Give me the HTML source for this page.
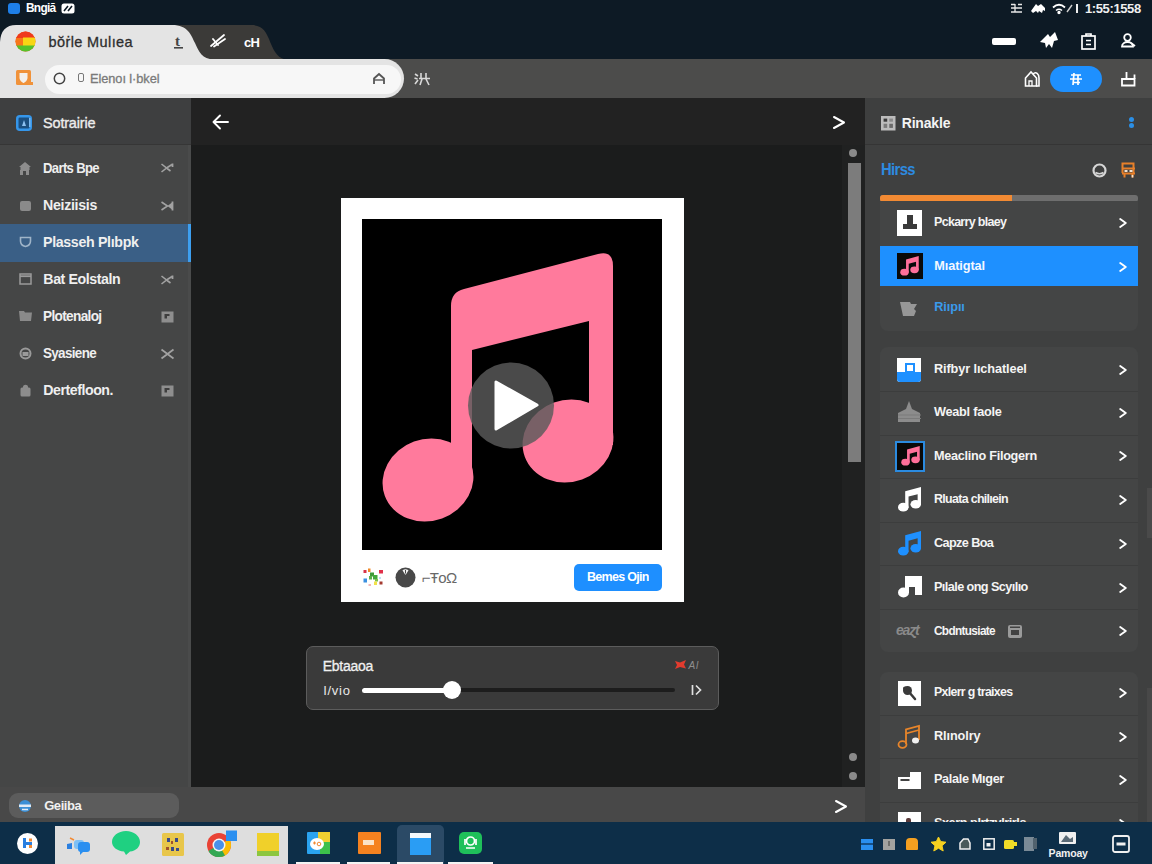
<!DOCTYPE html>
<html><head><meta charset="utf-8">
<style>
*{box-sizing:border-box;margin:0;padding:0}
html,body{width:1152px;height:864px;overflow:hidden;background:#0d1a25;font-family:"Liberation Sans",sans-serif;color:#fff}
.a{position:absolute}
.t{position:absolute;white-space:nowrap;font-weight:bold;line-height:1}
svg{position:absolute;overflow:visible}
/* sidebar */
.sb-item{position:absolute;left:0;width:191px;height:37px}
.sb-item .lbl{position:absolute;left:43px;top:11px;font-size:14px;font-weight:bold;line-height:1;color:#f2f2f2;letter-spacing:-0.2px}
/* right rows */
.row{position:absolute;left:880px;width:258px;height:43.6px}
.row .lbl{position:absolute;left:54px;top:15px;font-size:13px;font-weight:bold;line-height:1;color:#f4f4f4;letter-spacing:-0.3px;white-space:nowrap}
.row .chev{position:absolute;left:238px;top:15px;width:8px;height:13px}
.sep{position:absolute;left:880px;width:258px;height:1px;background:#3c3d3d}
</style></head><body>

<!-- ===== top system bar ===== -->
<div class="a" id="sysbar" style="left:0;top:0;width:1152px;height:59px;background:#0d1a25"></div>
<div class="a" style="left:8px;top:3px;width:12px;height:11px;background:#1e7fe8;border-radius:3px"></div>
<div class="t" style="left:26px;top:2px;font-size:12px;color:#fff;letter-spacing:-0.7px;transform:scaleX(0.988);transform-origin:0 0">Bngiā</div>
<svg style="left:61px;top:3px" width="14" height="11" viewBox="0 0 14 11"><rect x="0.5" y="0.5" width="13" height="10" rx="2.5" fill="#fff"/><path d="M3 8L7 3M7 8l4-5" stroke="#0d1a25" stroke-width="1.6"/></svg>
<!-- sys right -->
<svg style="left:1010px;top:3px" width="14" height="11" viewBox="0 0 14 11" fill="none" stroke="#e8e8e8" stroke-width="1.3"><path d="M1 1.5h4M1 5h11M1 9h11M5 1v8M8 1.5h4"/></svg>
<svg style="left:1030px;top:3px" width="16" height="11" viewBox="0 0 16 11"><path d="M1 8l5-7 2 2 3-2 4 4v3l-2-1-1 3-3-2-1 2-2-2-3 2z" fill="#fff"/></svg>
<svg style="left:1052px;top:3px" width="14" height="11" viewBox="0 0 14 11" fill="none" stroke="#fff" stroke-width="1.8"><path d="M1 4.5Q7 -1 13 4.5"/><path d="M4 7.5Q7 5 10 7.5" stroke-width="1.6"/><circle cx="7" cy="9.5" r="0.8" fill="#fff"/></svg>
<svg style="left:1066px;top:3px" width="16" height="12" viewBox="0 0 16 12" fill="none" stroke="#cfcfcf" stroke-width="1.4"><path d="M1 9L6 2"/><path d="M11 1v9" stroke="#eee" stroke-width="2"/></svg>
<div class="t" style="left:1085px;top:2px;font-size:13px;color:#f0f0f0;letter-spacing:-0.39px">1:55:1558</div>

<!-- ===== tab strip ===== -->
<svg style="left:0;top:0" width="1152" height="60" viewBox="0 0 1152 60">
<path d="M150,59.5 L150,25 L251,25 C263,25 266,32 269,39 C273,49 276,57 285,59.5 Z" fill="#3b3a38"/>
<path d="M0,60 L0,42 Q1,25 16,25 L172,25 C188,25 191,35 195,43 C199,52 202,59 214,59.5 L214,60 Z" fill="#e4e4e4"/>
</svg>
<!-- favicon -->
<svg style="left:15px;top:31px" width="21" height="21" viewBox="0 0 21 21"><defs><clipPath id="fv"><circle cx="10.5" cy="10.5" r="10"/></clipPath></defs>
<g clip-path="url(#fv)"><rect width="21" height="21" fill="#f25a1a"/><rect x="0" y="0" width="21" height="7" fill="#ef3a1c"/><rect x="8" y="6.5" width="13" height="9" fill="#f7d614"/><rect x="0" y="7" width="8" height="8" fill="#f7761a"/><rect x="0" y="14.5" width="21" height="7" fill="#55c22a"/></g></svg>
<div class="t" style="left:48.5px;top:35.0px;font-size:14.5px;font-weight:normal;color:#2e2e2e;-webkit-text-stroke:0.3px #2e2e2e;letter-spacing:0.39px">bŏṙle Mulıea</div>
<div class="t" style="left:175px;top:34.0px;font-size:15px;color:#444;font-family:'Liberation Serif',serif">t</div>
<svg style="left:174px;top:47px" width="9" height="2"><rect width="9" height="1.6" fill="#444"/></svg>
<svg style="left:209px;top:33px" width="18" height="16" viewBox="0 0 18 16" fill="none" stroke="#fff" stroke-width="1.8" stroke-linecap="round"><path d="M2 13L15 2"/><path d="M5 13.5L16 6"/><path d="M4 6l5 6"/></svg>
<div class="t" style="left:244px;top:35.5px;font-size:13px;color:#fff;letter-spacing:-0.61px">cH</div>
<!-- tab row right icons -->
<div class="a" style="left:992px;top:37.5px;width:24px;height:7.5px;background:#fff;border-radius:2px"></div>
<svg style="left:1040px;top:32px" width="18" height="17" viewBox="0 0 18 17"><path d="M0 10L8 2l2 3 5-5 3 8-4 1-2 7-3-4-3 4-1-5z" fill="#fff"/></svg>
<svg style="left:1081px;top:33px" width="15" height="17" viewBox="0 0 15 17" fill="none" stroke="#fff" stroke-width="1.7"><rect x="1" y="3" width="13" height="13"/><path d="M5 3V1h5v2" /><path d="M5 7.5h5M5 11.5h5" stroke-width="1.5"/></svg>
<svg style="left:1121px;top:33px" width="15" height="16" viewBox="0 0 15 16" fill="none" stroke="#fff" stroke-width="1.8"><circle cx="6.5" cy="4.5" r="3.3"/><path d="M1 13.5c0-6 11-6 11 0z"/><path d="M10 10l4 3" /></svg>

<!-- ===== toolbar ===== -->
<div class="a" id="toolbar" style="left:0;top:59px;width:1152px;height:39px;background:#4c4c4b"></div>
<div class="a" id="tb-light" style="left:0;top:59px;width:404px;height:39px;background:#e4e4e4;border-radius:0 20px 20px 0"></div>
<div class="a" id="url" style="left:45px;top:65px;width:356px;height:28.5px;background:#f7f7f7;border-radius:14.5px"></div>
<!-- orange icon -->
<svg style="left:16px;top:70px" width="18" height="17" viewBox="0 0 18 17"><rect x="0" y="0" width="15" height="15" rx="1.5" fill="#f0923a"/><path d="M3.5 3h8v5c0 3-4 5-4 5s-4-2-4-5z" fill="#f3f0ec"/><path d="M11 12l6 0 0 3-6 0z" fill="#f0923a"/></svg>
<svg style="left:53px;top:72px" width="13" height="13" viewBox="0 0 13 13"><circle cx="6.5" cy="6.5" r="5.2" fill="none" stroke="#444" stroke-width="1.5"/></svg>

<div class="a" style="left:78px;top:73px;width:6px;height:9px;border:1.5px solid #777;border-radius:2px"></div>
<div class="t" style="left:90px;top:73.0px;font-size:12.8px;font-weight:normal;color:#7a7a7a;-webkit-text-stroke:0.3px #7a7a7a;letter-spacing:-0.07px">Elenoı l·bkel</div>
<svg style="left:372px;top:72px" width="14" height="13" viewBox="0 0 14 13" fill="none" stroke="#555" stroke-width="1.8"><path d="M2 12V6.5L7 2l5 4.5V12"/><path d="M2 8h10" stroke-width="1.4"/></svg>

<svg style="left:414px;top:72px" width="17" height="14" viewBox="0 0 17 14" fill="none" stroke="#d8d8d8" stroke-width="1.6"><path d="M1 2l3 2M0.5 6l3 1M1 12l3-4"/><path d="M7 1v5M12 1v5M5 6.5h11M8 7l-2 6M12 7l3 6"/></svg>
<!-- toolbar right -->
<svg style="left:1024px;top:70px" width="17" height="17" viewBox="0 0 17 17" fill="none" stroke="#fff" stroke-width="1.6"><path d="M1.5 16V8L7 2l5.5 6V16z"/><path d="M9 4c3-3 6 0 6 4v8h-3"/><path d="M5 16v-5h3v5" stroke-width="1.3"/></svg>
<div class="a" style="left:1050px;top:66px;width:52px;height:26px;background:#1e90ff;border-radius:13px"></div>
<svg style="left:1069px;top:72px" width="14" height="14" viewBox="0 0 14 14" fill="none" stroke="#fff" stroke-width="1.7"><path d="M2 3h10M1 7h12M4 10.5h7M5 1l-1 12M9 3v10"/></svg>
<svg style="left:1120px;top:71px" width="16" height="16" viewBox="0 0 16 16" fill="none" stroke="#fff" stroke-width="1.8"><path d="M2 8h12.5v6.5H2z"/><path d="M6.5 8V1"/><path d="M14.5 8V3.5"/></svg>

<!-- ===== main panes ===== -->
<div class="a" id="sidebar" style="left:0;top:98px;width:191px;height:724px;background:#454646;border-right:3px solid #4a4b4b"></div>
<div class="a" id="sb-head" style="left:0;top:98px;width:191px;height:47px;background:#3e3f40;border-bottom:1px solid #363636"></div>
<div class="a" id="center" style="left:191px;top:98px;width:674px;height:724px;background:#1b1c1c"></div>
<div class="a" id="c-head" style="left:191px;top:98px;width:674px;height:47px;background:#222222"></div>
<div class="a" id="right" style="left:865px;top:98px;width:287px;height:724px;background:#3f4040"></div>
<div class="a" id="r-head" style="left:865px;top:98px;width:287px;height:47px;background:#3e3f3f;border-bottom:1px solid #353535"></div>
<div class="a" id="botbar" style="left:0;top:787px;width:865px;height:35px;background:#484848"></div>

<!-- ===== sidebar content ===== -->
<div class="a" style="left:0;top:224px;width:191px;height:38px;background:#3a5f86"></div>
<div class="a" style="left:188px;top:224px;width:3px;height:38px;background:#3d9ff0"></div>
<svg style="left:16px;top:115px" width="16" height="16" viewBox="0 0 16 16"><rect x="1.250" y="1.250" width="13.500" height="13.500" rx="2.500" fill="#1b4f80" stroke="#3596ea" stroke-width="2.500"/><path d="M6 11l2-6 2 6z" fill="#8cc0f0"/><path d="M13 3h1.500v9H13z" fill="#7ab8f0"/></svg>
<div class="t sbl" style="left:43px;top:115.500px;font-size:14.500px;font-weight:normal;color:#ececec;-webkit-text-stroke:0.35px #ececec;letter-spacing:-0.18px">Sotrairie</div>
<div class="t sbl" style="left:43px;top:160.7px;font-size:14.2px;color:#efefef;letter-spacing:-0.7px;transform:scaleX(0.922);transform-origin:0 0">Darts Bpe</div>
<svg style="left:19px;top:161.5px" width="12" height="13" viewBox="0 0 12 13"><path d="M6 0L0 5h1.5v3H1v5h3V9h3v4h3V8h.5V5H12z" fill="#8d8d8d"/></svg>
<svg style="left:161px;top:163px" width="13" height="10" viewBox="0 0 13 10" fill="none" stroke="#a2a2a2" stroke-width="1.6"><path d="M0.500 1l5 4-5 4"/><path d="M5.500 5L11 1.500M5.500 5l4 3" /><path d="M11.500 0.500v3.500" stroke-width="1.8"/></svg>
<div class="t sbl" style="left:43px;top:198.2px;font-size:14.2px;color:#efefef;letter-spacing:-0.31px">Neiziisis</div>
<div class="a" style="left:20px;top:200.5px;width:11px;height:10px;background:#8a8a8a;border-radius:2px"></div>
<svg style="left:161px;top:200.5px" width="13" height="10" viewBox="0 0 13 10" fill="none" stroke="#a2a2a2" stroke-width="1.6"><path d="M0.500 1l6 4-6 4"/><path d="M6.500 5l4.500-3.500v7z" fill="#a2a2a2" stroke="none"/><path d="M11.500 0.500v9" stroke-width="1.8"/></svg>
<div class="t sbl" style="left:43px;top:235.2px;font-size:14.2px;color:#efefef;letter-spacing:-0.33px">Plasseh Plıbpk</div>
<svg style="left:19px;top:236.0px" width="13" height="12" viewBox="0 0 13 12" fill="none" stroke="#9fb4c8" stroke-width="1.6"><path d="M1.5 1.5h10v3.5c0 3-2.5 5-5 5.5C4 10 1.5 8 1.500 5z"/></svg>
<div class="t sbl" style="left:43.3px;top:272.2px;font-size:14.2px;color:#efefef;letter-spacing:-0.41px">Bat Eolstaln</div>
<svg style="left:19px;top:273.0px" width="13" height="12" viewBox="0 0 13 12" fill="none" stroke="#9a9a9a" stroke-width="1.5"><rect x="1" y="1" width="11" height="10"/><path d="M1 3.2h11" stroke-width="1.8"/></svg>
<svg style="left:161px;top:274.5px" width="13" height="10" viewBox="0 0 13 10" fill="none" stroke="#a2a2a2" stroke-width="1.6"><path d="M0.500 1l5 4-5 4"/><path d="M5.500 5L11 1.500M5.500 5l4 3" /><path d="M11.500 0.500v3.500" stroke-width="1.8"/></svg>
<div class="t sbl" style="left:43.3px;top:309.2px;font-size:14.2px;color:#efefef;letter-spacing:-0.7px;transform:scaleX(0.962);transform-origin:0 0">Plotenaloj</div>
<svg style="left:19px;top:310.0px" width="13" height="12" viewBox="0 0 13 12"><path d="M0 1h5l1 1.5h7L12 11H1z" fill="#8a8a8a"/></svg>
<svg style="left:161px;top:310.5px" width="13" height="12" viewBox="0 0 13 12"><rect x="0.500" y="0.500" width="12" height="11" fill="#8e8e8e"/><rect x="3.500" y="3" width="5" height="4.500" fill="#3e3e3e"/><rect x="6" y="5" width="4" height="3" fill="#8e8e8e"/></svg>
<div class="t sbl" style="left:43.3px;top:346.2px;font-size:14.2px;color:#efefef;letter-spacing:-0.7px;transform:scaleX(0.948);transform-origin:0 0">Syasiene</div>
<svg style="left:19px;top:347.0px" width="13" height="13" viewBox="0 0 13 13"><circle cx="6.500" cy="6.500" r="5" fill="none" stroke="#9a9a9a" stroke-width="2"/><rect x="3.500" y="5" width="6" height="4" fill="#9a9a9a"/></svg>
<svg style="left:161px;top:348.5px" width="13" height="10" viewBox="0 0 13 10" fill="none" stroke="#a2a2a2" stroke-width="1.700"><path d="M0.500 0.500l12 9M0.500 9.500l12-9"/></svg>
<div class="t sbl" style="left:43.3px;top:383.2px;font-size:14.2px;color:#efefef;letter-spacing:-0.47px">Dertefloon.</div>
<svg style="left:20px;top:384.0px" width="11" height="13" viewBox="0 0 11 13"><path d="M3 3c0-3 5-3 5 0v1H3z" fill="#8d8d8d"/><rect x="0.500" y="3.500" width="10" height="9" rx="1.5" fill="#8d8d8d"/></svg>
<svg style="left:161px;top:384.5px" width="13" height="12" viewBox="0 0 13 12"><rect x="0.500" y="0.500" width="12" height="11" fill="#8e8e8e"/><rect x="3.500" y="3" width="5" height="4.500" fill="#3e3e3e"/><rect x="6" y="5" width="4" height="3" fill="#8e8e8e"/></svg>
<div class="a" style="left:9px;top:793px;width:170px;height:24.5px;background:#5c5c5c;border-radius:9px"></div>
<svg style="left:18px;top:799px" width="14" height="14" viewBox="0 0 14 14"><circle cx="7" cy="7" r="6" fill="#3a8fd6"/><rect x="1" y="5.500" width="12" height="2.500" fill="#dfeaf5"/><path d="M4 10.500h6" stroke="#dfeaf5" stroke-width="1.500"/></svg>
<div class="t" style="left:44.2px;top:799px;font-size:13px;color:#f0f0f0;letter-spacing:-0.44px">Geiiba</div>
<!-- ===== center ===== -->
<svg style="left:212px;top:114px" width="17" height="16" viewBox="0 0 17 16" fill="none" stroke="#fff" stroke-width="1.900" stroke-linecap="round" stroke-linejoin="round"><path d="M8 1.500L1.500 8 8 14.500M1.500 8H16"/></svg>
<svg style="left:833px;top:116px" width="12" height="13" viewBox="0 0 12 13" fill="none" stroke="#fff" stroke-width="2" stroke-linecap="round" stroke-linejoin="round"><path d="M1 1l10 5.500L1 12"/></svg>
<div class="a" style="left:842px;top:145px;width:23px;height:642px;background:#202121"></div>
<div class="a" style="left:848px;top:163px;width:13px;height:299px;background:#7c7c7c"></div>
<div class="a" style="left:849px;top:149px;width:8px;height:8px;background:#8a8a8a;border-radius:4px"></div>
<div class="a" style="left:849px;top:753px;width:8px;height:8px;background:#8a8a8a;border-radius:4px"></div>
<div class="a" style="left:849px;top:772px;width:8px;height:8px;background:#8a8a8a;border-radius:4px"></div>
<svg style="left:835px;top:800px" width="12" height="13" viewBox="0 0 12 13" fill="none" stroke="#fff" stroke-width="2" stroke-linecap="round" stroke-linejoin="round"><path d="M1 1l10 5.500L1 12"/></svg>
<div class="a" style="left:341px;top:197.5px;width:343px;height:404.5px;background:#ffffff"></div>
<div class="a" style="left:362px;top:219px;width:300px;height:330.5px;background:#000"></div>
<svg style="left:0;top:0" width="1152" height="864" viewBox="0 0 1152 864">
<g fill="#ff7a9c">
<ellipse cx="428" cy="480" rx="46" ry="41" transform="rotate(-20 428 480)"/>
<ellipse cx="568" cy="441" rx="46" ry="41" transform="rotate(-20 568 441)"/>
<path d="M451,306 Q451,292 464,289 L598,254 Q613,250 613,266 L613,445 L589,445 L589,321 L472,350 L472,485 L451,485 Z"/>
</g>
<circle cx="511" cy="405.500" r="43" fill="#5a5a5a" fill-opacity="0.82"/>
<path d="M496,382 L496,429 L537,405 Z" fill="#fff" stroke="#fff" stroke-width="3" stroke-linejoin="round"/>
</svg>
<svg style="left:363px;top:567px" width="21" height="21" viewBox="0 0 21 21">
<rect x="0.500" y="3" width="3" height="3" fill="#d8334a"/><rect x="5" y="1.500" width="2.500" height="3.500" fill="#f08a2a"/><rect x="16" y="3" width="4" height="3.500" fill="#e0304a"/>
<rect x="7" y="5.500" width="4" height="4" fill="#3f9a3a"/><rect x="10" y="8" width="4.500" height="4.500" fill="#43a83c"/><rect x="6" y="9" width="3" height="3.500" fill="#5ab04a"/><rect x="12" y="12" width="3" height="2.500" fill="#7cc04a"/>
<rect x="0.500" y="11.500" width="3.500" height="4" fill="#3a90e0"/><rect x="16.500" y="14.500" width="3" height="3" fill="#a43a30"/><rect x="11" y="14.500" width="3" height="3.500" fill="#f2e24a"/><rect x="5.500" y="17" width="2.500" height="2" fill="#f0b8b8"/><rect x="16" y="10" width="2" height="2" fill="#bfe0f5"/>
</svg>
<svg style="left:395px;top:567px" width="21" height="21" viewBox="0 0 21 21"><circle cx="10.500" cy="10.500" r="10" fill="#484848"/><path d="M7.500 3.200q3-1.800 6 0l-2.600 4.300h-0.800z" fill="#f4f4f4"/><path d="M10.500 3v3.500" stroke="#484848" stroke-width="1"/></svg>
<div class="t" style="left:421.7px;top:569.5px;font-size:15px;font-weight:normal;color:#686868;letter-spacing:-0.65px">⌐ŦoΩ</div>
<div class="a" style="left:574px;top:563.500px;width:88px;height:27.500px;background:#1e8fff;border-radius:5px"></div>
<div class="t" style="left:586.9px;top:571px;font-size:12.500px;color:#fff;letter-spacing:-0.7px;transform:scaleX(0.999);transform-origin:0 0">Bemes Ojin</div>
<div class="a" style="left:305.500px;top:646px;width:413.500px;height:64px;background:#3a3a3a;border:1px solid #5c5c5c;border-radius:7px"></div>
<div class="t" style="left:322.7px;top:658.6px;font-size:14px;font-weight:normal;color:#f0f0f0;-webkit-text-stroke:0.3px #f0f0f0;letter-spacing:-0.24px">Ebtaaoa</div>
<div class="t" style="left:323.2px;top:684px;font-size:13px;font-weight:normal;color:#e8e8e8;letter-spacing:0.71px">I/vio</div>
<div class="a" style="left:362px;top:688px;width:313px;height:4px;background:#1d1d1d;border-radius:2px"></div>
<div class="a" style="left:362px;top:687.500px;width:90px;height:5px;background:#fff;border-radius:2.500px"></div>
<div class="a" style="left:443px;top:681px;width:18px;height:18px;background:#fff;border-radius:9px"></div>
<svg style="left:675px;top:660px" width="12" height="10" viewBox="0 0 12 10"><path d="M0 1l5 1.500L11 0 9 4.500l2 4-6-1.500L0 9l2-4z" fill="#e23b2e"/></svg>
<div class="t" style="left:688.4px;top:661px;font-size:10px;font-weight:normal;font-style:italic;color:#8e8e8e;letter-spacing:1.05px">Al</div>
<svg style="left:691px;top:684px" width="11" height="12" viewBox="0 0 11 12" fill="none" stroke="#e0e0e0" stroke-width="1.700"><path d="M1.500 1v10"/><path d="M5 1.500l4.500 4.500L5 10.500"/></svg>

<!-- ===== right panel content ===== -->
<svg style="left:881px;top:116px" width="14.500" height="14.500" viewBox="0 0 14 14"><rect x="0" y="0" width="14" height="14" fill="#bcbcbc"/><rect x="2.500" y="2.500" width="3.500" height="3" fill="#3a3a3a"/><rect x="8" y="2.500" width="3.500" height="3" fill="#8a8a8a"/><rect x="2.500" y="7.500" width="3.500" height="4" fill="#7a7a7a"/><rect x="8" y="7.500" width="3.500" height="4" fill="#6a6a6a"/></svg>
<div class="t rl" style="left:901.7px;top:116px;font-size:14px;color:#f4f4f4;letter-spacing:-0.17px">Rinakle</div>
<div class="a" style="left:1128.5px;top:116.5px;width:5.5px;height:5.5px;background:#2b8fe6;border-radius:3px"></div><div class="a" style="left:1128.5px;top:122.5px;width:5.5px;height:5.5px;background:#2b8fe6;border-radius:3px"></div>
<div class="t rl" style="left:880.8px;top:160.5px;font-size:16.5px;color:#2d8be0;letter-spacing:-0.7px;transform:scaleX(0.897);transform-origin:0 0">Hirss</div>
<svg style="left:1091.5px;top:162.5px" width="15" height="15" viewBox="0 0 15 15" fill="none" stroke="#d6d6d6" stroke-width="2.2"><circle cx="7.500" cy="7.500" r="6"/><path d="M3.500 9.500q4 2.500 8 0" stroke-width="1.6"/></svg>
<svg style="left:1120.5px;top:161.5px" width="15" height="16" viewBox="0 0 15 16" fill="none" stroke="#e8802a" stroke-width="2"><path d="M1.500 11V1.500h11V11"/><path d="M1 6.500h13M3.500 11v4.500M11.500 11v4.500M1 11.500h13"/><path d="M3.500 9h3M8.500 9h3" stroke="#f3e3d3" stroke-width="2"/><path d="M11.500 13v2.500" stroke="#f3e3d3" stroke-width="1.600"/></svg>
<div class="a" style="left:880px;top:195px;width:258px;height:6.500px;background:#6e6e6e;border-radius:3px"></div>
<div class="a" style="left:880px;top:195px;width:132px;height:6.500px;background:#f28a33;border-radius:3px 0 0 3px"></div>
<div class="a" style="left:880px;top:201px;width:258px;height:130px;background:#444545;border-radius:0 0 8px 8px"></div>
<div class="a" style="left:880px;top:347px;width:258px;height:305px;background:#444545;border-radius:8px"></div>
<div class="a" style="left:880px;top:672px;width:258px;height:160px;background:#444545;border-radius:8px 8px 0 0"></div>
<div class="a" style="left:880px;top:246px;width:258px;height:40px;background:#1e90ff"></div>
<div class="sep" style="top:391px"></div>
<div class="sep" style="top:434.5px"></div>
<div class="sep" style="top:478px"></div>
<div class="sep" style="top:521.5px"></div>
<div class="sep" style="top:565px"></div>
<div class="sep" style="top:608.5px"></div>
<div class="sep" style="top:715px"></div>
<div class="sep" style="top:758px"></div>
<div class="sep" style="top:802px"></div>
<div class="t rl" style="left:934.3px;top:216.2px;font-size:12.7px;color:#f4f4f4;letter-spacing:-0.7px;transform:scaleX(0.983);transform-origin:0 0">Pckarry blaey</div>
<svg style="left:1119px;top:218.0px" width="8" height="10" viewBox="0 0 8 10" fill="none" stroke="#fff" stroke-width="1.9" stroke-linecap="round" stroke-linejoin="round"><path d="M1.2 1L6.8 5 1.2 9"/></svg>
<div class="t rl" style="left:934.3px;top:259.7px;font-size:12.7px;color:#f4f8ff;letter-spacing:-0.09px">Mıatigtal</div>
<svg style="left:1119px;top:261.5px" width="8" height="10" viewBox="0 0 8 10" fill="none" stroke="#fff" stroke-width="1.9" stroke-linecap="round" stroke-linejoin="round"><path d="M1.2 1L6.8 5 1.2 9"/></svg>
<div class="t rl" style="left:934.3px;top:301.2px;font-size:12.7px;color:#3a9aea;letter-spacing:-0.09px">Riıpıı</div>
<div class="t rl" style="left:934px;top:362.7px;font-size:12.7px;color:#f4f4f4;letter-spacing:-0.10px">Rifbyr lıchatleel</div>
<svg style="left:1119px;top:364.5px" width="8" height="10" viewBox="0 0 8 10" fill="none" stroke="#fff" stroke-width="1.9" stroke-linecap="round" stroke-linejoin="round"><path d="M1.2 1L6.8 5 1.2 9"/></svg>
<div class="t rl" style="left:934px;top:405.7px;font-size:12.7px;color:#f4f4f4;letter-spacing:-0.25px">Weabl faole</div>
<svg style="left:1119px;top:407.5px" width="8" height="10" viewBox="0 0 8 10" fill="none" stroke="#fff" stroke-width="1.9" stroke-linecap="round" stroke-linejoin="round"><path d="M1.2 1L6.8 5 1.2 9"/></svg>
<div class="t rl" style="left:934px;top:449.5px;font-size:12.7px;color:#f4f4f4;letter-spacing:-0.29px">Meaclino Filogern</div>
<svg style="left:1119px;top:451.3px" width="8" height="10" viewBox="0 0 8 10" fill="none" stroke="#fff" stroke-width="1.9" stroke-linecap="round" stroke-linejoin="round"><path d="M1.2 1L6.8 5 1.2 9"/></svg>
<div class="t rl" style="left:934px;top:493.2px;font-size:12.7px;color:#f4f4f4;letter-spacing:-0.7px;transform:scaleX(0.980);transform-origin:0 0">Rluata chilıein</div>
<svg style="left:1119px;top:495.0px" width="8" height="10" viewBox="0 0 8 10" fill="none" stroke="#fff" stroke-width="1.9" stroke-linecap="round" stroke-linejoin="round"><path d="M1.2 1L6.8 5 1.2 9"/></svg>
<div class="t rl" style="left:934px;top:537.2px;font-size:12.7px;color:#f4f4f4;letter-spacing:-0.62px">Capze Boa</div>
<svg style="left:1119px;top:539.0px" width="8" height="10" viewBox="0 0 8 10" fill="none" stroke="#fff" stroke-width="1.9" stroke-linecap="round" stroke-linejoin="round"><path d="M1.2 1L6.8 5 1.2 9"/></svg>
<div class="t rl" style="left:934px;top:580.7px;font-size:12.7px;color:#f4f4f4;letter-spacing:-0.59px">Pılale ong Scyılıo</div>
<svg style="left:1119px;top:582.5px" width="8" height="10" viewBox="0 0 8 10" fill="none" stroke="#fff" stroke-width="1.9" stroke-linecap="round" stroke-linejoin="round"><path d="M1.2 1L6.8 5 1.2 9"/></svg>
<div class="t rl" style="left:934px;top:624.5px;font-size:12.7px;color:#f4f4f4;letter-spacing:-0.7px;transform:scaleX(0.930);transform-origin:0 0">Cbdntusiate</div>
<svg style="left:1119px;top:626.3px" width="8" height="10" viewBox="0 0 8 10" fill="none" stroke="#fff" stroke-width="1.9" stroke-linecap="round" stroke-linejoin="round"><path d="M1.2 1L6.8 5 1.2 9"/></svg>
<div class="t rl" style="left:934px;top:686.4px;font-size:12.7px;color:#f4f4f4;letter-spacing:-0.7px;transform:scaleX(0.974);transform-origin:0 0">Pxlerr g traixes</div>
<svg style="left:1119px;top:688.2px" width="8" height="10" viewBox="0 0 8 10" fill="none" stroke="#fff" stroke-width="1.9" stroke-linecap="round" stroke-linejoin="round"><path d="M1.2 1L6.8 5 1.2 9"/></svg>
<div class="t rl" style="left:934px;top:729.9px;font-size:12.7px;color:#f4f4f4;letter-spacing:-0.10px">Rlınolry</div>
<svg style="left:1119px;top:731.7px" width="8" height="10" viewBox="0 0 8 10" fill="none" stroke="#fff" stroke-width="1.9" stroke-linecap="round" stroke-linejoin="round"><path d="M1.2 1L6.8 5 1.2 9"/></svg>
<div class="t rl" style="left:934px;top:773.4px;font-size:12.7px;color:#f4f4f4;letter-spacing:-0.34px">Palale Mıger</div>
<svg style="left:1119px;top:775.2px" width="8" height="10" viewBox="0 0 8 10" fill="none" stroke="#fff" stroke-width="1.9" stroke-linecap="round" stroke-linejoin="round"><path d="M1.2 1L6.8 5 1.2 9"/></svg>
<div class="t rl" style="left:934px;top:817.2px;font-size:12.7px;color:#f4f4f4;letter-spacing:-0.45px">Sxern plrtzylrirls</div>
<svg style="left:1119px;top:819.0px" width="8" height="10" viewBox="0 0 8 10" fill="none" stroke="#fff" stroke-width="1.9" stroke-linecap="round" stroke-linejoin="round"><path d="M1.2 1L6.8 5 1.2 9"/></svg>
<div class="a" style="left:897px;top:210px;width:24.500px;height:26px;background:#fff"></div>
<div class="a" style="left:906.500px;top:214.500px;width:6px;height:9.500px;background:#3a3a3a"></div><div class="a" style="left:902.500px;top:223.500px;width:14px;height:5.500px;background:#3a3a3a"></div>
<div class="a" style="left:896.500px;top:252.500px;width:26px;height:26.500px;background:#0a0a0a"></div>
<svg style="left:900px;top:256px" width="19" height="20" viewBox="0 0 24 26"><g fill="#ff6f9a"><ellipse cx="5.500" cy="21" rx="5.500" ry="4.500"/><ellipse cx="18.500" cy="18" rx="5.500" ry="4.500"/><path d="M7.500 4.500L24 0v18.500h-3.500V7.500L11 10v11.500H7.500z"/></g></svg>
<svg style="left:900px;top:302px" width="17" height="14" viewBox="0 0 17 14"><path d="M0 0h10l1 2h6l-3 5 2 2-2 5H3z" fill="#979797"/></svg>
<div class="a" style="left:897px;top:358px;width:24px;height:24px;background:#fff;border-radius:0 0 3px 3px"></div><div class="a" style="left:897px;top:371.500px;width:24px;height:10.500px;background:#1e90ff;border-radius:0 0 3px 3px"></div><div class="a" style="left:904.500px;top:362.500px;width:10.500px;height:10px;border:2px solid #1e90ff;background:#fff"></div>
<svg style="left:898px;top:401px" width="23" height="21" viewBox="0 0 23 21"><path d="M11 0l3 8 8 4v9H0V12l8-4z" fill="#8c8c8c"/><path d="M0 14h23M0 17.500h23" stroke="#7a7a7a" stroke-width="1"/></svg>
<div class="a" style="left:895px;top:441px;width:29.500px;height:31px;background:#0a0a0a;border:2.500px solid #2b8be0"></div>
<svg style="left:900.5px;top:446px" width="19" height="20" viewBox="0 0 24 26"><g fill="#ff6f9a"><ellipse cx="5.500" cy="21" rx="5.500" ry="4.500"/><ellipse cx="18.500" cy="18" rx="5.500" ry="4.500"/><path d="M7.500 4.500L24 0v18.500h-3.500V7.500L11 10v11.500H7.500z"/></g></svg>
<svg style="left:898px;top:486.5px" width="23" height="25" viewBox="0 0 24 26"><g fill="#ffffff"><ellipse cx="5.500" cy="21" rx="5.500" ry="4.500"/><ellipse cx="18.500" cy="18" rx="5.500" ry="4.500"/><path d="M7.500 4.500L24 0v18.500h-3.500V7.500L11 10v11.500H7.500z"/></g></svg>
<svg style="left:898px;top:531px" width="23" height="25" viewBox="0 0 24 26"><g fill="#1e90ff"><ellipse cx="5.500" cy="21" rx="5.500" ry="4.500"/><ellipse cx="18.500" cy="18" rx="5.500" ry="4.500"/><path d="M7.500 4.500L24 0v18.500h-3.500V7.500L11 10v11.500H7.500z"/></g></svg>
<svg style="left:898px;top:575.500px" width="24" height="22" viewBox="0 0 24 22"><g fill="#fff"><ellipse cx="5.500" cy="16.500" rx="5.500" ry="5"/><path d="M7 0h17v19h-7v-8h-6v6H7z"/></g></svg>
<div class="t" style="left:896px;top:623px;font-size:14px;font-style:italic;color:#8a8a8a;letter-spacing:-1.200px">eaɀt</div>
<svg style="left:1008px;top:625px" width="14" height="13" viewBox="0 0 14 13"><rect x="0" y="0" width="14" height="13" rx="2" fill="#9a9a9a"/><rect x="3" y="5" width="8" height="5" fill="#424242"/><rect x="2" y="1.500" width="10" height="1.500" fill="#424242"/></svg>
<div class="a" style="left:897.500px;top:681px;width:23.500px;height:24.500px;background:#fff"></div>
<svg style="left:902px;top:685px" width="15" height="16" viewBox="0 0 15 16"><circle cx="5.500" cy="5.500" r="4.500" fill="#3a3a3a"/><circle cx="3" cy="3.500" r="2" fill="#3a3a3a"/><path d="M7 7l6 7" stroke="#3a3a3a" stroke-width="2.500" stroke-linecap="round"/></svg>
<svg style="left:896.500px;top:724px" width="24" height="25" viewBox="0 0 24 25" fill="none" stroke="#e8852a" stroke-width="1.800"><path d="M9 20V5.500L22 2v14"/><path d="M9 9.500l13-3.500"/><ellipse cx="5.500" cy="20.500" rx="4" ry="3.300"/><ellipse cx="18.500" cy="16.500" rx="3.500" ry="3" fill="#f0f0f0" stroke="none"/></svg>
<svg style="left:898px;top:772px" width="23" height="17" viewBox="0 0 23 17"><path d="M0 5h12V0h11v17H0z" fill="#fff"/><rect x="2.500" y="7" width="9" height="2" fill="#424242"/></svg>
<div class="a" style="left:897.500px;top:812px;width:23.500px;height:20px;background:#fff"></div><div class="a" style="left:906px;top:818px;width:5px;height:6px;background:#5a3a3a;border-radius:2px"></div>
<div class="a" style="left:1147px;top:488px;width:5px;height:50px;background:#4a4a4a"></div><div class="a" style="left:1147px;top:688px;width:5px;height:134px;background:#484848"></div>

<!-- ===== taskbar ===== -->
<div class="a" id="taskbar" style="left:0;top:822px;width:1152px;height:42px;background:#0d2e48"></div>

<div class="a" style="left:54.500px;top:825.500px;width:233.500px;height:39px;background:#dedede"></div>
<div class="a" style="left:396.500px;top:825px;width:47.500px;height:39px;background:#2b4a66;border-radius:5px 5px 0 0"></div>
<div class="a" style="left:17px;top:832.500px;width:21px;height:21px;background:#fff;border-radius:11px"></div>
<svg style="left:22px;top:837px" width="12" height="12" viewBox="0 0 12 12"><rect x="1" y="1" width="3" height="10" fill="#2a7fe0"/><rect x="1" y="5" width="9" height="3" fill="#2a7fe0"/><rect x="7" y="1.500" width="3" height="3" fill="#f28a33"/><rect x="7" y="8" width="3" height="3" fill="#f28a33"/></svg>
<svg style="left:66px;top:836px" width="25" height="19" viewBox="0 0 25 19"><path d="M1 8l5-1v6H1z" fill="#2a7fe0"/><path d="M4 2l4 2" stroke="#f28a33" stroke-width="1.500"/><rect x="8" y="4" width="10" height="9" rx="3" fill="#7ec0f5"/><rect x="12" y="6" width="12" height="10" rx="3" fill="#2a8ff0"/><path d="M14 15l0 4 4-4z" fill="#2a8ff0"/></svg>
<svg style="left:112px;top:831px" width="28" height="24" viewBox="0 0 28 24"><path d="M14 0C22 0 28 5 28 11c0 5-4 9-10 9.500L14 24l-2-3.500C5 20 0 16 0 11 0 5 6 0 14 0z" fill="#1fd081"/></svg>
<svg style="left:162px;top:832.500px" width="22" height="23" viewBox="0 0 22 23"><rect width="22" height="23" rx="1.500" fill="#e8c64a"/><g fill="#3a4a8a"><rect x="5" y="5" width="3" height="4"/><rect x="13" y="5" width="3" height="4"/><rect x="9" y="14" width="3" height="4"/><rect x="14" y="15" width="3" height="3"/></g><g fill="#a0522d"><rect x="9" y="8" width="2" height="3"/><rect x="4" y="14" width="3" height="3"/></g></svg>
<svg style="left:207px;top:830px" width="31" height="27" viewBox="0 0 31 27"><circle cx="12" cy="15" r="12" fill="#e94235"/><path d="M12 15L1.600 21A12 12 0 0 0 12 27z" fill="#34a853"/><path d="M12 15v12A12 12 0 0 0 22.400 9z" fill="#fbbc05"/><path d="M12 15L1.600 21A12 12 0 0 0 18 25.400z" fill="#34a853"/><circle cx="12" cy="15" r="6.500" fill="#f4f4f4"/><circle cx="12" cy="15" r="5" fill="#4a90e8"/><rect x="19" y="0.500" width="11" height="10.500" fill="#2a8ff0"/></svg>
<div class="a" style="left:256.500px;top:832.500px;width:22px;height:23px;background:#f0d02a"></div><div class="a" style="left:256.500px;top:851px;width:22px;height:4.500px;background:#8cc63f"></div>
<svg style="left:307px;top:832px" width="23" height="22" viewBox="0 0 23 22"><rect width="23" height="22" rx="1" fill="#2aa3f0"/><rect x="11" y="0" width="12" height="11" fill="#f0d030"/><rect x="13" y="10" width="10" height="12" fill="#3cc04a"/><ellipse cx="10" cy="12" rx="7" ry="6" fill="#fff"/><path d="M6 11h3M7.500 9.500v3" stroke="#f28a33" stroke-width="1.200"/><circle cx="12" cy="12" r="1.800" fill="none" stroke="#f28a33" stroke-width="1"/></svg>
<div class="a" style="left:357.500px;top:832px;width:23px;height:22px;background:#f58220;border-radius:1px"></div><div class="a" style="left:363px;top:840px;width:11px;height:5px;background:#fbe3c8"></div>
<div class="a" style="left:409.500px;top:832.500px;width:21.500px;height:22px;background:#2a9df4"></div><div class="a" style="left:409.500px;top:832.500px;width:21.500px;height:5.500px;background:#f4f8fc"></div>
<svg style="left:459px;top:832px" width="23" height="22" viewBox="0 0 23 22"><rect width="23" height="22" rx="5" fill="#1fc05a"/><g fill="none" stroke="#fff" stroke-width="1.700"><circle cx="11.500" cy="9" r="4"/><path d="M6 7v6M17 7v6M7 16h9"/></g></svg>
<div class="a" style="left:296px;top:861.500px;width:43.5px;height:3px;background:#f4f4f4"></div>
<div class="a" style="left:347px;top:861.500px;width:43px;height:3px;background:#f4f4f4"></div>
<div class="a" style="left:397px;top:861.500px;width:46px;height:3px;background:#f4f4f4"></div>
<div class="a" style="left:448px;top:861.500px;width:45px;height:3px;background:#f4f4f4"></div>
<div class="a" style="left:860.500px;top:838.500px;width:12px;height:11px;background:#2a8ff0"></div><div class="a" style="left:860.500px;top:843px;width:12px;height:1.500px;background:#14508a"></div>
<div class="a" style="left:882.500px;top:838.500px;width:12.500px;height:11px;background:#a3a3a0"></div><div class="a" style="left:888px;top:841px;width:2px;height:5px;background:#6f6f6c"></div>
<div class="a" style="left:905.500px;top:838px;width:12px;height:12px;background:#f5a020;border-radius:4px 4px 1px 1px"></div>
<svg style="left:931px;top:836.500px" width="15" height="14" viewBox="0 0 15 14"><path d="M7.500 0l2.200 4.600 5.300.6-4 3.500 1.200 5.300-4.700-2.800L2.800 14 4 8.700 0 5.200l5.300-.6z" fill="#f5d020" stroke="#f5d020" stroke-width="1" stroke-linejoin="round"/></svg>
<svg style="left:959px;top:837.500px" width="12" height="12" viewBox="0 0 12 12"><path d="M1 11V5l3.500-4H9l2 4v6z" fill="#4a5a5a" stroke="#f0f0f0" stroke-width="1.500"/></svg>
<svg style="left:983px;top:837.500px" width="12" height="12" viewBox="0 0 12 12"><rect x="0.800" y="0.800" width="10.400" height="10.400" fill="#0d2e48" stroke="#f0f0f0" stroke-width="1.500"/><rect x="3.500" y="5" width="4" height="3.500" fill="#f0f0f0"/></svg>
<div class="a" style="left:1004px;top:839.500px;width:10px;height:9.500px;background:#f0dc28;border-radius:1.500px"></div><div class="a" style="left:1013px;top:842px;width:3.500px;height:4px;background:#f0dc28"></div>
<div class="a" style="left:1024px;top:837px;width:10px;height:14px;background:#7a8a96"></div><div class="a" style="left:1033px;top:838px;width:4px;height:11px;background:#51626e"></div>
<svg style="left:1059px;top:832px" width="17" height="12" viewBox="0 0 17 12"><rect width="17" height="12" rx="1" fill="#f0f0f0"/><path d="M2 10l5-7 4 4 3-2v5z" fill="#5a6a76"/></svg>
<div class="t" style="left:1048.6px;top:848px;font-size:10.500px;color:#f0f0f0;letter-spacing:-0.20px">Pamoay</div>
<svg style="left:1112px;top:835px" width="18" height="18" viewBox="0 0 18 18"><rect x="1" y="1" width="16" height="16" rx="2" fill="none" stroke="#f0f0f0" stroke-width="1.800"/><rect x="4.500" y="7.500" width="9" height="3" fill="#f0f0f0"/></svg>
</body></html>
